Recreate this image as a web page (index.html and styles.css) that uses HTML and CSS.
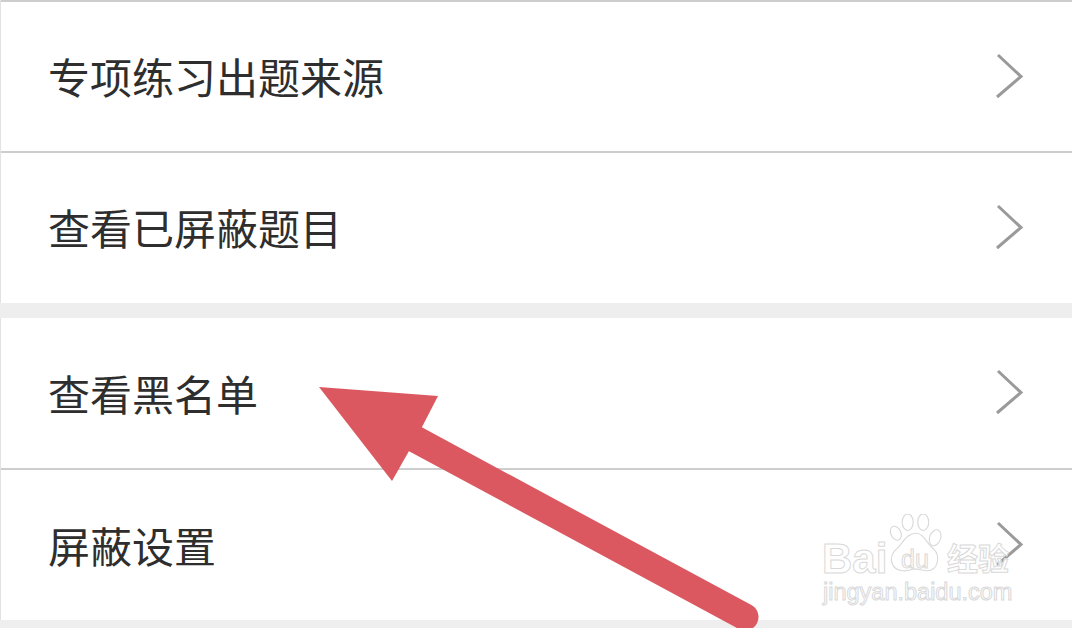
FILE: index.html
```html
<!DOCTYPE html>
<html lang="zh-CN">
<head>
    <meta charset="UTF-8">
    <title>设置</title>
    <link rel="stylesheet" href="styles.css">
</head>
<body>
    <main class="page">
        <section class="group">
            <div class="row">
                <span class="row-label">专项练习出题来源</span>
                <svg class="chevron" viewBox="0 0 30 48"><path d="M3 3 L26 24.500 L2 45"/></svg>
            </div>
            <div class="row">
                <span class="row-label">查看已屏蔽题目</span>
                <svg class="chevron" viewBox="0 0 30 48"><path d="M3 3 L26 24.500 L2 45"/></svg>
            </div>
        </section>
        <section class="group">
            <div class="row">
                <span class="row-label">查看黑名单</span>
                <svg class="chevron" viewBox="0 0 30 48"><path d="M3 3 L26 24.500 L2 45"/></svg>
            </div>
            <div class="row">
                <span class="row-label">屏蔽设置</span>
                <svg class="chevron" viewBox="0 0 30 48"><path d="M3 3 L26 24.500 L2 45"/></svg>
            </div>
        </section>
    </main>

    <!-- red annotation arrow drawn over the list -->
    <svg class="arrow" viewBox="0 0 1072 628">
        <path class="arrow-shaft" d="M415 439 L745 617"/>
        <polygon class="arrow-head" points="319,387 438,396 422,427 409,451 392,481"/>
    </svg>

    <!-- watermark -->
    <div class="watermark">
        <svg class="paw" viewBox="0 0 60 70">
            <ellipse cx="9" cy="21" rx="5.500" ry="8" transform="rotate(-25 9 21)"/>
            <ellipse cx="22" cy="9" rx="6" ry="9"/>
            <ellipse cx="39" cy="9" rx="6" ry="9"/>
            <ellipse cx="52" cy="26" rx="6" ry="9" transform="rotate(20 52 26)"/>
            <path d="M31 21 C40 21 43 33 50 38 C58 45 56 62 43 62 C36 62 34 60 30 60 C26 60 23 63 16 62 C4 61 1 48 8 40 C16 34 20 21 31 21 Z"/>
        </svg>
        <span class="wm-bai">Bai</span>
        <span class="wm-du">du</span>
        <span class="wm-cn">经验</span>
        <span class="wm-url">jingyan.baidu.com</span>
    </div>
</body>
</html>
```

FILE: styles.css
```css
* {
    margin: 0;
    padding: 0;
    box-sizing: border-box;
}

body {
    width: 1072px;
    height: 628px;
    overflow: hidden;
    position: relative;
    background: #eeeeee;
    font-family: "Noto Sans CJK SC", "Liberation Sans", sans-serif;
}

.page {
    display: flex;
    flex-direction: column;
    gap: 15px;
}

.group {
    background: #ffffff;
    border-left: 1px solid #e2e2e2;
}

.row {
    height: 152px;
    display: flex;
    align-items: center;
    justify-content: space-between;
    padding: 0 47px 0 47px;
    border-bottom: 2px solid #cdcdcd;
}

.group .row:last-child {
    height: 150px;
    border-bottom: none;
}

.group:first-child .row {
    padding-bottom: 2px;
}

.group:first-child .row:first-child {
    height: 153px;
    border-top: 2px solid #cdcdcd;
}

.row-label {
    font-size: 42px;
    line-height: 1;
    color: #2e2e2e;
}

.chevron {
    width: 30px;
    height: 48px;
    margin-top: -2px;
    flex-shrink: 0;
}

.group:first-child .chevron {
    margin-top: 0;
}

.chevron path {
    fill: none;
    stroke: #9a9a9a;
    stroke-width: 3;
}

.arrow {
    position: absolute;
    left: 0;
    top: 0;
    width: 1072px;
    height: 628px;
}

.arrow-shaft {
    stroke: #dc5860;
    stroke-width: 27;
    stroke-linecap: round;
    fill: none;
}

.arrow-head {
    fill: #dc5860;
}

/* watermark is white with a thin grey outline */
.watermark {
    position: absolute;
    left: 820px;
    top: 510px;
    width: 200px;
    height: 100px;
    font-family: "Liberation Sans", sans-serif;
    color: rgba(255, 255, 255, 0.75);
    -webkit-text-stroke: 1px #d9d9d9;
}

.watermark span {
    position: absolute;
    line-height: 1;
    white-space: nowrap;
}

.paw {
    position: absolute;
    left: 67px;
    top: 4px;
    width: 56px;
    height: 64px;
}

.paw ellipse,
.paw path {
    fill: #ffffff;
    fill-opacity: 0.6;
    stroke: #d9d9d9;
    stroke-width: 1.200;
}

.wm-bai {
    left: 2px;
    top: 28px;
    font-size: 42px;
    font-weight: bold;
}

.wm-du {
    left: 81px;
    top: 37px;
    font-size: 25px;
}

.wm-cn {
    left: 127px;
    top: 31px;
    font-size: 31px;
    font-family: "Noto Sans CJK SC", sans-serif;
    font-weight: bold;
}

.wm-url {
    left: 3px;
    top: 71px;
    font-size: 23.500px;
}
```
